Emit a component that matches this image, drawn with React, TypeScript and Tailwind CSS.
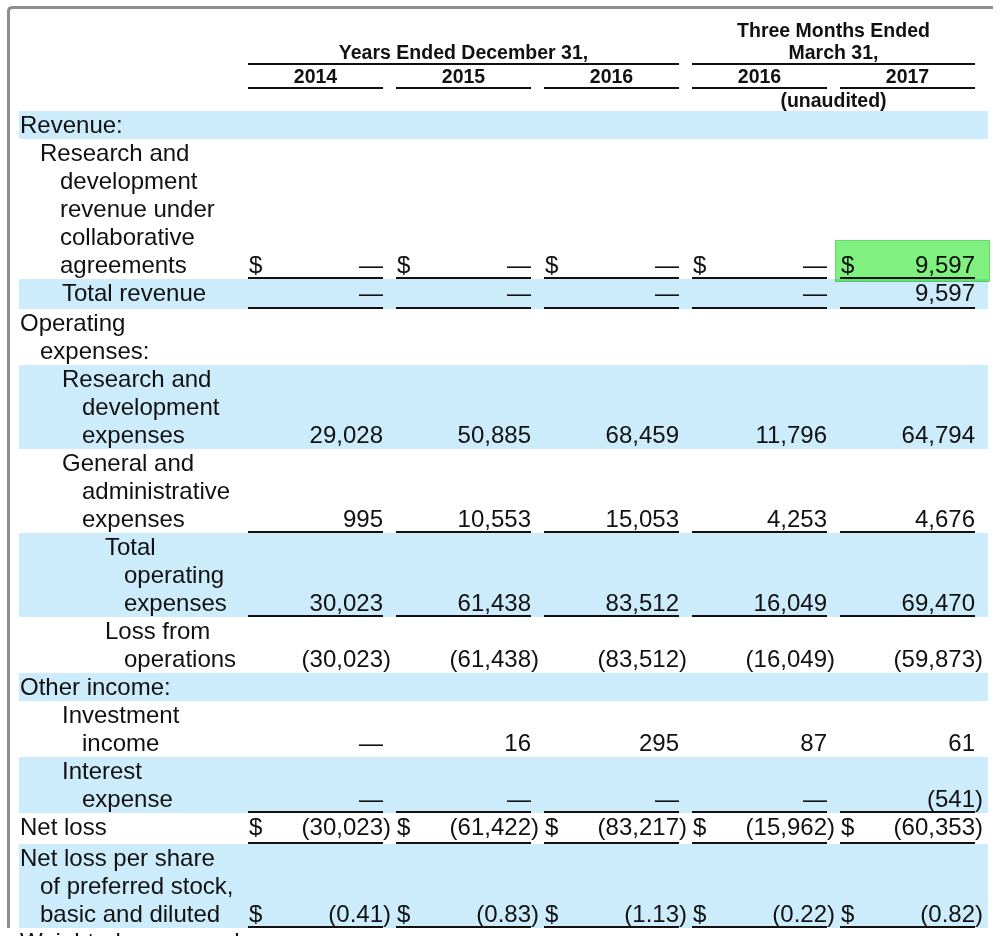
import React from "react";

type Line = [string, string];

interface RowDef {
  lines: Line[];
  blue: boolean;
  values?: string[];
  dollar?: boolean;
  underline?: boolean;
  pad?: string;
  highlight?: boolean;
}

const rows: RowDef[] = [
  { lines: [["pl-[1px]", "Revenue:"]], blue: true },
  {
    lines: [
      ["pl-[21px]", "Research and"],
      ["pl-[41px]", "development"],
      ["pl-[41px]", "revenue under"],
      ["pl-[41px]", "collaborative"],
      ["pl-[41px]", "agreements"],
    ],
    blue: false,
    values: ["—", "—", "—", "—", "9,597"],
    dollar: true,
    underline: true,
    highlight: true,
  },
  {
    lines: [["pl-[43px]", "Total revenue"]],
    blue: true,
    values: ["—", "—", "—", "—", "9,597"],
    underline: true,
    pad: "pb-[2px]",
  },
  {
    lines: [
      ["pl-[1px]", "Operating"],
      ["pl-[21px]", "expenses:"],
    ],
    blue: false,
  },
  {
    lines: [
      ["pl-[43px]", "Research and"],
      ["pl-[63px]", "development"],
      ["pl-[63px]", "expenses"],
    ],
    blue: true,
    values: ["29,028", "50,885", "68,459", "11,796", "64,794"],
  },
  {
    lines: [
      ["pl-[43px]", "General and"],
      ["pl-[63px]", "administrative"],
      ["pl-[63px]", "expenses"],
    ],
    blue: false,
    values: ["995", "10,553", "15,053", "4,253", "4,676"],
    underline: true,
  },
  {
    lines: [
      ["pl-[86px]", "Total"],
      ["pl-[105px]", "operating"],
      ["pl-[105px]", "expenses"],
    ],
    blue: true,
    values: ["30,023", "61,438", "83,512", "16,049", "69,470"],
    underline: true,
  },
  {
    lines: [
      ["pl-[86px]", "Loss from"],
      ["pl-[105px]", "operations"],
    ],
    blue: false,
    values: ["(30,023)", "(61,438)", "(83,512)", "(16,049)", "(59,873)"],
  },
  { lines: [["pl-[1px]", "Other income:"]], blue: true },
  {
    lines: [
      ["pl-[43px]", "Investment"],
      ["pl-[63px]", "income"],
    ],
    blue: false,
    values: ["—", "16", "295", "87", "61"],
  },
  {
    lines: [
      ["pl-[43px]", "Interest"],
      ["pl-[63px]", "expense"],
    ],
    blue: true,
    values: ["—", "—", "—", "—", "(541)"],
    underline: true,
  },
  {
    lines: [["pl-[1px]", "Net loss"]],
    blue: false,
    values: ["(30,023)", "(61,422)", "(83,217)", "(15,962)", "(60,353)"],
    dollar: true,
    underline: true,
    pad: "pb-[3px]",
  },
  {
    lines: [
      ["pl-[1px]", "Net loss per share"],
      ["pl-[21px]", "of preferred stock,"],
      ["pl-[21px]", "basic and diluted"],
    ],
    blue: true,
    values: ["(0.41)", "(0.83)", "(1.13)", "(0.22)", "(0.82)"],
    dollar: true,
    underline: true,
  },
];

function ValueCell({
  value,
  dollar,
  underline,
  pad,
  highlight,
}: {
  value: string;
  dollar?: boolean;
  underline?: boolean;
  pad?: string;
  highlight?: boolean;
}) {
  const hasParen = value.endsWith(")");
  const main = hasParen ? value.slice(0, -1) : value;
  return (
    <div className="relative flex w-[148px] shrink-0">
      <div
        className={`flex w-[135px] shrink-0 items-end justify-between ${
          underline ? "shadow-[inset_0_-2px_0_#111]" : ""
        } ${pad ?? ""}`}
      >
        <span className="pl-[1px]">{dollar ? "$" : ""}</span>
        <span>{main}</span>
      </div>
      <div className={`flex w-[13px] shrink-0 items-end ${pad ?? ""}`}>
        <span>{hasParen ? ")" : ""}</span>
      </div>
      {highlight && (
        <div className="pointer-events-none absolute bottom-[-3px] left-[-5px] right-[-2px] h-[42px] border border-[#66da66] bg-[#80f080] mix-blend-multiply" />
      )}
    </div>
  );
}

function DataRow({ row }: { row: RowDef }) {
  return (
    <div className={`flex ${row.blue ? "bg-[#ccebfb]" : ""}`}>
      <div className={`w-[229px] shrink-0 ${row.pad ?? ""}`}>
        {row.lines.map(([pl, text], i) => (
          <div key={i} className={`${pl} whitespace-nowrap`}>
            {text}
          </div>
        ))}
      </div>
      {row.values
        ? row.values.map((v, i) => (
            <ValueCell
              key={i}
              value={v}
              dollar={row.dollar}
              underline={row.underline}
              pad={row.pad}
              highlight={row.highlight && i === 4}
            />
          ))
        : null}
    </div>
  );
}

export default function App() {
  return (
    <div className="h-[936px] w-[1000px] overflow-hidden bg-white pl-[7px] pt-[6px] font-['Liberation_Sans',Arial,sans-serif] text-[#111]">
      <div className="w-[986px] rounded-tl-[5px] border-l-[3px] border-t-[3px] border-[#8e8e8e] pl-[9px]">
        {/* Header */}
        <div className="pt-[10px] text-[19.5px] font-bold leading-[22px]">
          <div className="flex">
            <div className="w-[229px] shrink-0" />
            <div className="flex w-[431px] shrink-0 items-end justify-center pb-[2px] shadow-[inset_0_-2px_0_#111]">
              Years Ended December 31,
            </div>
            <div className="w-[13px] shrink-0" />
            <div className="w-[283px] shrink-0 pb-[2px] text-center shadow-[inset_0_-2px_0_#111]">
              <div>Three Months Ended</div>
              <div>March 31,</div>
            </div>
          </div>
          <div className="flex">
            <div className="w-[229px] shrink-0" />
            {["2014", "2015", "2016", "2016", "2017"].map((y, i) => (
              <div key={i} className="flex w-[148px] shrink-0">
                <div className="w-[135px] shrink-0 pb-[2px] text-center shadow-[inset_0_-2px_0_#111]">
                  {y}
                </div>
                <div className="w-[13px] shrink-0" />
              </div>
            ))}
          </div>
          <div className="flex">
            <div className="w-[229px] shrink-0" />
            <div className="w-[444px] shrink-0" />
            <div className="w-[283px] shrink-0 text-center">(unaudited)</div>
          </div>
        </div>

        {/* Body */}
        <div className="w-[969px] text-[24px] leading-[28px]">
          {rows.map((r, i) => (
            <DataRow key={i} row={r} />
          ))}
        </div>
      </div>
      <div className="pl-[13px] text-[24px] leading-[28px]">
        Weighted-average shares
      </div>
    </div>
  );
}
